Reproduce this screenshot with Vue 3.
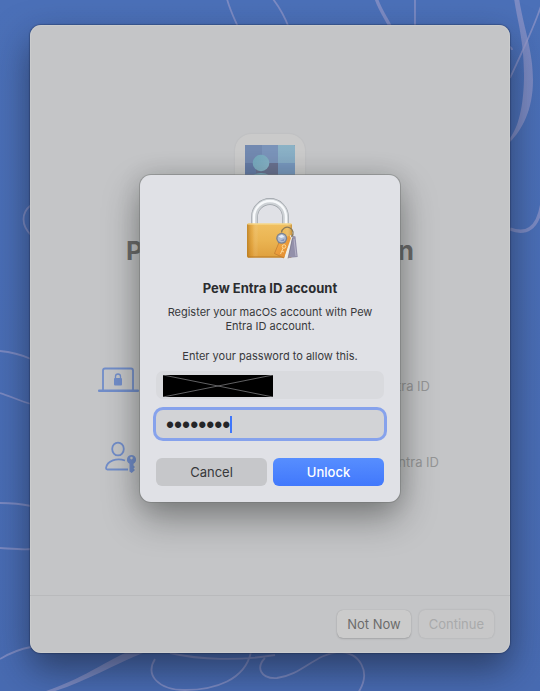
<script setup>
import { ref } from 'vue'

const username = ref('')
const password = ref('password')
</script>

<template>
  <main class="desktop">
    <svg class="wallpaper" viewBox="0 0 540 691" preserveAspectRatio="xMidYMid slice" aria-hidden="true">
      <g fill="none" stroke="#9c9dcb" stroke-opacity=".6" stroke-width="1.8">
        <path d="M227-1C230 10 234 18 238 27M273-1Q283 12 289 28M415-1V28M541 6C533 30 525 45 510 78M509 46Q512 48 512 50" />
        <path d="M376-2C380 10 386 18 391 28M510 229C525 235 538 230 542 203" stroke-width="3.4" />
        <path d="M31 205C21 213 21 225 31 235M0 351C12 352 22 355 31 359M0 393C10 396 20 401 31 404M0 503C12 503 22 504 31 506M0 548C15 549 25 550 31 549M0 659C10 653 20 649 31 647" />
        <path d="M155 659C145 675 158 690 185 690C215 690 245 680 251 652M170 653C200 660 240 661 275 655M265 658C256 667 260 679 277 678C302 675 315 654 338 652C360 652 372 672 358 693" />
      </g>
      <g fill="#9c9dcb" fill-opacity=".6">
        <path d="M514-2C517 20 524 40 524 75C524 100 520 125 510 138V142C522 130 533 110 533 80C533 50 524 30 519-2Z" />
        <path d="M43 692C80 680 105 662 125 653H143C115 664 85 682 52 692Z" />
      </g>
    </svg>

    <section class="window">
      <div class="content">
        <div class="app-icon">
          <svg viewBox="0 0 50 50" aria-hidden="true">
            <defs>
              <linearGradient id="head" x1="0" y1="0" x2="1" y2="1"><stop stop-color="#70a6ba" /><stop offset="1" stop-color="#8bb6c8" /></linearGradient>
              <linearGradient id="side" x1="0" y1="0" x2="0" y2="1"><stop stop-color="#8bb2c5" /><stop offset="1" stop-color="#7f9fc5" /></linearGradient>
            </defs>
            <rect width="50" height="50" rx="1" fill="#69718f" />
            <path d="M0 1Q0 0 1 0H17V18H0Z" fill="#7289b0" />
            <path d="M17 0H33V18H17Z" fill="#7a93b9" />
            <path d="M0 18H11V50H0Z" fill="#657ba5" />
            <path d="M33 0H49Q50 0 50 1V50H33Z" fill="url(#side)" />
            <path d="M33 18H50V50H33Z" fill="#7797bd" />
            <circle cx="16" cy="18" r="8.3" fill="url(#head)" />
            <path d="M4 46V37Q6 28 16 28T28 37V46Z" fill="url(#head)" />
          </svg>
        </div>

        <h1 class="headline"><span>P</span><span>n</span></h1>

        <ul class="features">
          <li class="feature">
            <svg viewBox="0 0 42 34" aria-hidden="true">
              <path d="M5 26V6.500Q5 4.500 7 4.500H33Q35 4.500 35 6.500V26" fill="none" stroke="#718dc9" stroke-width="1.800" />
              <rect y="25.500" width="41" height="2.600" rx="1" fill="#718dc9" />
              <rect x="16" y="14" width="8" height="7.500" rx="1" fill="#718dc9" />
              <path d="M17.500 14.500V12.500A2.500 2.500 0 0 1 22.500 12.500V14.500" fill="none" stroke="#718dc9" stroke-width="1.300" />
            </svg>
            <span>Entra ID</span>
          </li>
          <li class="feature wide">
            <svg viewBox="0 0 42 34" aria-hidden="true">
              <g fill="none" stroke="#718dc9" stroke-width="1.800">
                <ellipse cx="20" cy="9" rx="5.800" ry="6.400" />
                <path d="M27 20.500C19 17.500 9 20.500 8 28Q8 29.500 9.500 29.500H30" />
              </g>
              <path fill-rule="evenodd" fill="#718dc9" d="M33.500 15A4.600 4.600 0 0 1 35.500 23.700V25.500L37 27L35.500 28.500L37 30L33.700 33L31.500 31.500V23.700A4.600 4.600 0 0 1 33.500 15ZM33.500 16.800A1.300 1.300 0 1 0 33.500 19.400A1.300 1.300 0 0 0 33.500 16.800Z" />
            </svg>
            <span>Entra ID</span>
          </li>
        </ul>
      </div>

      <footer class="actions">
        <button type="button" class="plain">Not Now</button>
        <button type="button" class="plain" disabled>Continue</button>
      </footer>

      <div class="overlay">
        <form class="dialog" role="dialog" aria-labelledby="dialog-title" @submit.prevent>
          <svg class="lock" viewBox="0 0 64 64" aria-hidden="true">
            <defs>
              <linearGradient id="body" x1="0" y1="0" x2="0" y2="1"><stop stop-color="#f0c062" /><stop offset=".5" stop-color="#eab452" /><stop offset="1" stop-color="#dfa03e" /></linearGradient>
              <linearGradient id="edges"><stop stop-color="#a8690f" stop-opacity=".65" /><stop offset=".12" stop-color="#d88f25" stop-opacity=".3" /><stop offset=".25" stop-color="#fff" stop-opacity="0" /><stop offset=".85" stop-color="#fff" stop-opacity="0" /><stop offset="1" stop-color="#a8690f" stop-opacity=".5" /></linearGradient>
              <linearGradient id="card" x1="0" y1="0" x2="1" y2="1"><stop stop-color="#f6b34b" /><stop offset="1" stop-color="#df852d" /></linearGradient>
            </defs>
            <g fill="none">
              <path d="M16.500 28V20A15.500 15.500 0 0 1 47.500 20V28" stroke="#9da2a8" stroke-width="6.800" />
              <path d="M16.500 28V20A15.500 15.500 0 0 1 47.500 20V28" stroke="#cdd1d5" stroke-width="5.600" />
              <path d="M16 28V20A16 16 0 0 1 48 20V28" stroke="#f7f9fb" stroke-width="2.400" />
            </g>
            <rect x="9" y="26.500" width="45" height="34" rx="1.500" fill="url(#body)" />
            <rect x="9" y="26.500" width="45" height="34" rx="1.500" fill="url(#edges)" />
            <path d="M9.500 27H53.500" stroke="#fae29a" />
            <path d="M10 60H53" stroke="#b87922" />
            <path d="M53 38L57.500 39.500L59.700 60L49 61Z" fill="#9390aa" />
            <path d="M56 42L58 59" stroke="#b7b4c8" />
            <path d="M52 38L54.500 39.500L50 61.500H46Z" fill="#efeee8" />
            <path d="M54.500 41L50 61.500" stroke="#777385" stroke-width=".7" />
            <path d="M42 43L51.500 38.500L53 41L46 61L36.500 56.500Z" fill="url(#card)" />
            <path d="M42 43L36.500 56.500L46 61" fill="none" stroke="#b5712b" stroke-width=".6" />
            <g fill="none" stroke="#ffdf9e" stroke-width=".9"><circle cx="46" cy="49.500" r="1.800" /><path d="M45 51.300L42.500 57M44 54L46 55" /></g>
            <path d="M43.500 35.500A5.800 5.800 0 1 1 53.500 40" fill="none" stroke="#897958" stroke-width="1.300" />
            <circle cx="43.700" cy="41.300" r="5.500" fill="#7b8290" />
            <circle cx="43.700" cy="41.300" r="4.100" fill="#b0bbd0" />
            <path d="M40.500 39.500L44 37.500L46.500 40L43 41Z" fill="#e6edf8" />
            <path d="M42 44L46.500 41.500L46 44Z" fill="#8593bb" />
          </svg>

          <h2 id="dialog-title">Pew Entra ID account</h2>
          <p>Register your macOS account with Pew Entra ID account.</p>
          <p class="prompt">Enter your password to allow this.</p>

          <div class="field">
            <input v-model="username" type="text" aria-label="Username" readonly />
            <svg class="redaction" viewBox="0 0 110 22" aria-hidden="true">
              <rect width="110" height="22" />
              <path d="M0 0L110 22M0 22L110 0" stroke="#77777a" stroke-width=".8" />
            </svg>
          </div>
          <div class="field secret">
            <input v-model="password" type="password" aria-label="Password" />
            <span class="caret"></span>
          </div>

          <div class="buttons">
            <button type="button" class="cancel">Cancel</button>
            <button type="submit" class="unlock">Unlock</button>
          </div>
        </form>
      </div>
    </section>
  </main>
</template>

<style>
body {
  margin: 0;
}
</style>

<style scoped>
* {
  box-sizing: border-box;
}

.desktop {
  position: relative;
  display: flex;
  min-height: 100vh;
  padding: 25px 30px 38px;
  overflow: hidden;
  background: linear-gradient(#4b70b8, #486bb2);
  font-family: Inter, "Liberation Sans", sans-serif;
}

.wallpaper {
  position: absolute;
  inset: 0;
  width: 100%;
  height: 100%;
}

.window {
  position: relative;
  display: flex;
  flex: 1;
  flex-direction: column;
  border-radius: 11px;
  background: #c4c5c7;
  box-shadow: inset 0 0 0 1px rgba(210, 211, 211, 0.5), 0 0 1px 1px rgba(20, 30, 60, 0.3), 0 16px 36px rgba(20, 25, 40, 0.55);
}

.content {
  flex: 1;
  padding-top: 109px;
}

.app-icon {
  width: 70px;
  height: 70px;
  margin: 0 auto;
  padding: 11px 10px 9px;
  border-radius: 16px;
  background: #cacaca;
  box-shadow: 0 0 2px rgba(0, 0, 0, 0.08);
}

.app-icon svg {
  display: block;
  width: 50px;
}

.headline {
  display: flex;
  justify-content: space-between;
  width: 288px;
  margin: 31px auto 0;
  color: #6b6b6b;
  font-size: 26px;
  font-weight: 700;
  line-height: 32px;
}

.features {
  display: grid;
  gap: 42px;
  margin: 97px 0 0;
  padding: 0 71px 0 68px;
  list-style: none;
}

.feature {
  display: flex;
  align-items: center;
  justify-content: space-between;
  padding-right: 9px;
  color: #949596;
  font-size: 13px;
  line-height: 16px;
}

.feature.wide {
  padding-right: 0;
}

.feature svg {
  width: 42px;
  height: 34px;
}

.feature span {
  padding-top: 10px;
}

.actions {
  display: flex;
  justify-content: flex-end;
  gap: 8px;
  padding: 14px 16px 15px;
  border-top: 1px solid #b9babc;
}

button {
  height: 28px;
  border: 0;
  border-radius: 6px;
  font-family: inherit;
  font-size: 13px;
}

.plain {
  padding: 0 10px;
  background: #cbcbcb;
  box-shadow: 0 0 1px rgba(0, 0, 0, 0.2), 0 1px 2px rgba(0, 0, 0, 0.15);
  color: #6b6b6c;
}

.plain:disabled {
  background: #c7c7c8;
  box-shadow: 0 0 2px rgba(0, 0, 0, 0.15);
  color: #a9aaab;
}

.overlay {
  position: absolute;
  inset: 0;
  display: grid;
  place-items: center;
  padding-bottom: 2px;
}

.dialog {
  width: 260px;
  padding: 22px 16px 16px;
  border-radius: 11px;
  background: #e0e1e6;
  box-shadow: 0 0 0 1px rgba(110, 112, 114, 0.45), 0 16px 36px rgba(20, 22, 20, 0.4), 0 0 24px rgba(20, 22, 20, 0.12);
  text-align: center;
}

.lock {
  display: block;
  width: 64px;
  height: 64px;
  margin: 0 auto 19px;
}

h2 {
  margin: 0 0 9px;
  color: #2b2c2f;
  font-size: 13px;
  font-weight: 700;
  line-height: 16px;
}

p {
  margin: 0;
  color: #38393c;
  font-size: 11px;
  line-height: 14px;
}

.prompt {
  margin: 16px 0 8px;
}

.field {
  position: relative;
  height: 28px;
}

.field input {
  display: block;
  width: 100%;
  height: 100%;
  padding: 0 10px;
  border: 0;
  border-radius: 7px;
  outline: 0;
  background: #d9dade;
  color: #242528;
  font-family: inherit;
  font-size: 13px;
}

.redaction {
  position: absolute;
  top: 4px;
  left: 7px;
  width: 110px;
  height: 22px;
}

.secret {
  margin: 11px 0 20px;
}

.secret input {
  padding-top: 4px;
  background: #d2d3d6;
  box-shadow: 0 0 0 3px #86a2ec;
  font-family: "Liberation Sans", sans-serif;
  font-size: 23px;
}

.caret {
  position: absolute;
  top: 6px;
  left: 74px;
  width: 2px;
  height: 17px;
  background: #3f76fb;
}

.buttons {
  display: grid;
  grid-template-columns: 1fr 1fr;
  gap: 6px;
}

.cancel {
  background: #c6c7ca;
  color: #37383a;
}

.unlock {
  background: linear-gradient(#578eff, #4178fc);
  color: #fff;
  font-weight: 500;
}
</style>
